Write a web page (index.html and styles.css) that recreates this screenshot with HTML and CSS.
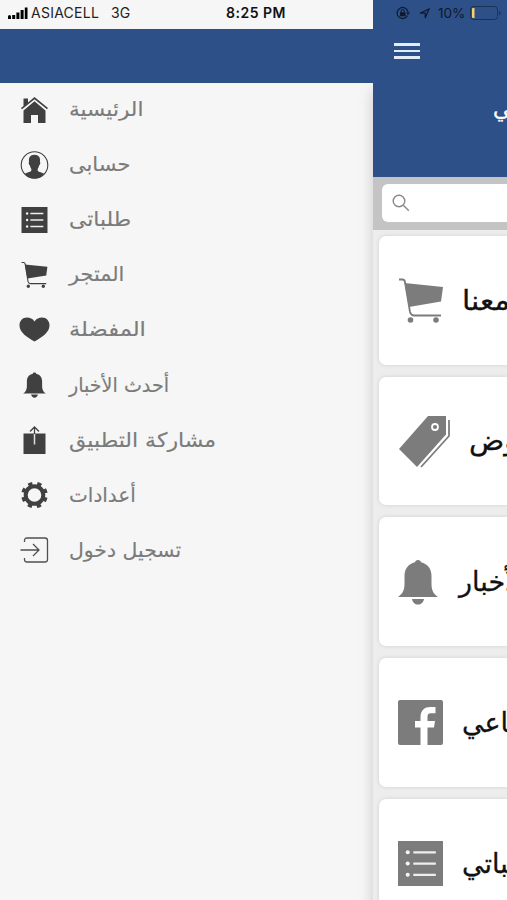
FILE: index.html
```html
<!DOCTYPE html>
<html lang="ar">
<head>
  <meta charset="UTF-8" />
  <meta name="viewport" content="width=device-width, initial-scale=1.0"/>
  <title>القائمة</title>
  <link rel="stylesheet" href="styles.css">
</head>
<body>
  <!-- shared icons -->
  <svg class="defs" width="0" height="0">
    <symbol id="cart" viewBox="0 0 46 46">
      <path d="M1 2.500h3.500q2 0 2.500 2.500l5 30q1 3.500 4 3.500H43" fill="none" stroke="currentColor" stroke-width="1.800"/>
      <path d="M6.500 6L45 10l-2 14.500-32 5.500z" fill="currentColor"/>
      <circle cx="12.500" cy="43" r="2.800" fill="currentColor"/>
      <circle cx="38" cy="43" r="2.800" fill="currentColor"/>
    </symbol>
    <symbol id="bell" viewBox="0 0 40 46">
      <path d="M20 1c2 0 2.500 1 3 2.200C30 5 33.500 10 33.500 17v8c0 6 2 10 6.500 13H0c4.500-3 6.500-7 6.500-13v-8C6.500 10 10 5 17 3.200 17.500 2 18 1 20 1zM14 40h12c-.5 3.500-3 5.500-6 5.500s-5.500-2-6-5.500z" fill="currentColor"/>
    </symbol>
    <symbol id="list" viewBox="0 0 44 44">
      <path d="M0 0h44v44H0z" fill="currentColor"/>
      <g fill="#f5f5f5"><circle cx="9.500" cy="11" r="2"/><circle cx="9.500" cy="22" r="2"/><circle cx="9.500" cy="33" r="2"/></g>
      <path d="M15 11h22M15 22h22M15 33h22" stroke="#eee" stroke-width="2.200"/>
    </symbol>
  </svg>

  <div class="screen">
    <aside class="drawer">
      <div class="status">
        <svg class="signal" width="20" height="12" viewBox="0 0 20 12">
          <path d="M0 9.500a1.300 1.300 0 0 1 3 0V12H0zM4.200 8h3v4h-3zM8.400 5.500h3V12h-3zM12.600 3h3v9h-3zM16.800.5h2.700V12h-2.700z"/>
        </svg>
        <span class="carrier">ASIACELL</span>
        <span class="network">3G</span>
        <span class="time">8:25 PM</span>
      </div>
      <div class="drawer-header"></div>
      <ul class="menu">
        <li>
          <svg width="28" height="28" viewBox="0 0 28 28" fill="#404040">
            <path d="M3 10V2.500h4.500v4L14 1l13.500 11-1 1.300L14 3.300 1.500 13.300.5 12z"/>
            <path d="M14 5.300L25 14.500V27h-7.500v-8h-7v8H3V14.500z"/>
          </svg>
          <span class="home" dir="rtl">الرئيسية</span>
        </li>
        <li>
          <svg width="28" height="28" viewBox="0 0 28 28">
            <circle cx="14" cy="14" r="13.300" fill="none" stroke="#404040" stroke-width="1.100"/>
            <path d="M14 3.800c4.500 0 6 3 5.500 7 .6 1 .2 3-.8 3.500-.5 1.800-1 3-1.500 3.500v2c1 1.500 4.500 1.500 6.800 3.200-2.500 3-6 4.500-10 4.500S6.500 26 4 23c2.300-1.700 5.800-1.700 6.800-3.200v-2c-.6-.5-1-1.700-1.500-3.500-1-.5-1.400-2.500-.8-3.500-.5-4 1-7 5.500-7z" fill="#404040"/>
          </svg>
          <span class="account" dir="rtl">حسابى</span>
        </li>
        <li>
          <svg width="26" height="26"><use href="#list"/></svg>
          <span class="my-orders" dir="rtl">طلباتى</span>
        </li>
        <li>
          <svg width="27" height="27"><use href="#cart"/></svg>
          <span class="store" dir="rtl">المتجر</span>
        </li>
        <li>
          <svg width="30" height="25" viewBox="0 0 30 25">
            <path d="M15 4.500C17 1.500 19.500.5 22.500.5 27 .5 30 4 30 8.500c0 7-8 12-15 16-7-4-15-9-15-16C0 4 3 .5 7.500.5c3 0 5.500 1 7.500 4z" fill="#404040"/>
          </svg>
          <span class="favourites" dir="rtl">المفضلة</span>
        </li>
        <li>
          <svg width="24" height="26"><use href="#bell"/></svg>
          <span class="latest" dir="rtl">أحدث الأخبار</span>
        </li>
        <li>
          <svg width="24" height="28" viewBox="0 0 24 28">
            <path d="M1 7.500h22V28H1z" fill="#404040"/>
            <path d="M12 8v10.500" stroke="#ddd" stroke-width="1.500"/>
            <path d="M12 8V1M7.500 5.500L12 1l4.500 4.500" fill="none" stroke="#404040" stroke-width="1.300"/>
          </svg>
          <span class="share" dir="rtl">مشاركة التطبيق</span>
        </li>
        <li>
          <svg width="28" height="28" viewBox="-14 -14 28 28" fill="none" stroke="#404040">
            <circle r="8.800" stroke-width="4"/>
            <circle r="11.500" stroke-width="3.600" stroke-dasharray="4.200 4.832" transform="rotate(12)"/>
          </svg>
          <span class="settings" dir="rtl">أعدادات</span>
        </li>
        <li>
          <svg width="28" height="26" viewBox="0 0 28 26" fill="none" stroke="#505050" stroke-width="1.300">
            <path d="M4 5V3.500Q4 1 6.500 1h18Q27 1 27 3.500v19q0 2.500-2.500 2.500h-18Q4 25 4 22.500V21M0 13h18M12.500 7l6 6-6 6"/>
          </svg>
          <span class="login" dir="rtl">تسجيل دخول</span>
        </li>
      </ul>
    </aside>

    <main class="page">
      <header class="page-header">
        <div class="status-right">
          <svg width="14" height="14" viewBox="0 0 14 14">
            <path d="M11.500 9.500A5.500 5.500 0 1 1 12 6" fill="none" stroke="#10182b" stroke-width="1.200"/>
            <path d="M10 6.500h4L12 9zM4 6.300h5.500v4H4z" fill="#10182b"/>
            <path d="M5.200 6.500V5a1.500 1.500 0 0 1 3 0v1.500" fill="none" stroke="#10182b"/>
          </svg>
          <svg class="arrow" width="11" height="11" viewBox="0 0 11 11">
            <path d="M10 1L6.200 10V5.200H1z" fill="none" stroke="#10182b" stroke-width="1.200"/>
          </svg>
          <span>10%</span>
          <svg class="battery" width="31" height="14" viewBox="0 0 31 14">
            <rect x=".5" y=".5" width="27" height="13" rx="3" fill="none" stroke="#1d3157"/>
            <path d="M2 3q0-1 1-1h1.500v10H3q-1 0-1-1z" fill="#f3d268"/>
            <path d="M29 4.500q1.500 1 1.500 2.500T29 9.500z" fill="#1d3157"/>
          </svg>
        </div>
        <div class="burger"><i></i><i></i><i></i></div>
        <h1 dir="rtl">عربي</h1>
      </header>

      <div class="search-bar">
        <div class="search">
          <svg width="18" height="18" viewBox="0 0 18 18" fill="none" stroke="#888" stroke-width="1.400">
            <circle cx="7" cy="7" r="5.800"/><path d="M11.300 11.300l5.500 5.500"/>
          </svg>
        </div>
      </div>

      <section class="cards">
        <div class="card">
          <svg width="46" height="46"><use href="#cart"/></svg>
          <span class="shop" dir="rtl">تسوق معنا</span>
        </div>
        <div class="card">
          <svg width="54" height="54" viewBox="0 0 54 54">
            <path d="M30 2h18v18.500L19 53 1 35z" fill="currentColor"/>
            <circle cx="37" cy="13" r="3" fill="none" stroke="#fff" stroke-width="1.800"/>
            <path d="M51 6v16L23 53" fill="none" stroke="currentColor" stroke-width="1.800"/>
          </svg>
          <span class="offers" dir="rtl">العروض</span>
        </div>
        <div class="card">
          <svg width="40" height="46"><use href="#bell"/></svg>
          <span class="news" dir="rtl">أحدث الأخبار</span>
        </div>
        <div class="card">
          <svg width="45" height="45" viewBox="0 0 45 45">
            <rect width="45" height="45" rx="2" fill="currentColor"/>
            <path d="M22.500 45V27.500H17v-6.500h5.500v-4C22.500 10 27 7 32 7h5.500v6.300H33c-2.500 0-3.500 1-3.500 3.500V21h7.500l-1 6.500h-6.500V45z" fill="#fff"/>
          </svg>
          <span class="social" dir="rtl">التواصل الاجتماعي</span>
        </div>
        <div class="card">
          <svg width="45" height="45"><use href="#list"/></svg>
          <span class="orders" dir="rtl">طلباتي</span>
        </div>
      </section>
    </main>
  </div>
</body>
</html>
```
FILE: styles.css
```css
* {
  box-sizing: border-box;
}
body {
  margin: 0;
  font-family: 'DejaVu Sans', sans-serif;
}
.defs {
  position: absolute;
}
.screen {
  display: flex;
  width: 507px;
  height: 900px;
  overflow: hidden;
  background: #f6f6f6;
}
svg {
  flex: none;
}

/* drawer */
.drawer {
  width: 373px;
  flex: none;
  color: #404040;
}
.status {
  height: 29px;
  display: flex;
  align-items: center;
  padding: 0 0 4px 8px;
  font-family: Inter, sans-serif;
  font-size: 14px;
  color: #222;
}
.carrier {
  margin-left: 3px;
  width: 80px;
  letter-spacing: 0.25px;
}
.network {
  width: 20px;
}
.time {
  margin-left: 95px;
  font-weight: 600;
  letter-spacing: 0.5px;
  color: #111;
}
.drawer-header {
  height: 54px;
  background: #2d5088;
}
.menu {
  list-style: none;
  margin: -1px 0 0;
  padding: 0;
}
.menu li {
  height: 55.1px;
  display: flex;
  align-items: center;
  padding-left: 14px;
}
.menu li svg {
  width: 41px;
}
.menu span {
  margin: -1px 0 0 14px;
  font-size: 20px;
  line-height: 30px;
  white-space: nowrap;
  color: #7b7b7b;
  -webkit-text-stroke: 0.15px #7b7b7b;
  transform-origin: left center;
}
.menu .home {
  transform: scaleX(1.08);
}
.menu .account {
  transform: scaleX(1.05);
}
.menu .my-orders {
  transform: scaleX(1.09);
}
.menu .store {
  transform: scaleX(1.04);
}
.menu .favourites {
  transform: scaleX(1.13);
}
.menu .latest {
  transform: scaleX(0.955);
}
.menu .share {
  transform: scaleX(1.1);
}
.menu .login {
  transform: scaleX(1.02);
}

/* page pushed to the right */
.page {
  width: 134px;
  flex: none;
  height: 900px;
  background: #ededed;
  box-shadow: 0 90px 14px rgba(0, 0, 0, 0.18);
}
.page-header {
  height: 177px;
  background: #2d5088;
  overflow: hidden;
}
.status-right {
  display: flex;
  align-items: center;
  height: 26px;
  padding-left: 23px;
  font-family: Inter, sans-serif;
  font-size: 13.5px;
  color: #10182b;
}
.arrow {
  margin: 0 8px 0 9px;
}
.battery {
  margin-left: 5px;
}
.burger {
  display: flex;
  flex-direction: column;
  gap: 4px;
  width: 26px;
  margin: 17px 0 0 21px;
}
.burger i {
  height: 2.5px;
  background: #e4ecfa;
}
h1 {
  width: max-content;
  margin: 35px 0 0 120px;
  font-size: 22px;
  line-height: 30px;
  font-weight: normal;
  color: #fff;
  -webkit-text-stroke: 0.3px #fff;
}
.search-bar {
  height: 53px;
  padding: 7px 0 8px 9px;
  background: #c4c4c4;
  overflow: hidden;
}
.search {
  height: 38px;
  display: flex;
  align-items: center;
  padding-left: 10px;
  background: #fff;
  border-radius: 6px 0 0 6px;
}
.cards {
  height: 670px;
  padding: 6px 0 0 6px;
  display: flex;
  flex-direction: column;
  gap: 12.2px;
  overflow: hidden;
}
.card {
  flex: none;
  height: 128.5px;
  display: flex;
  align-items: center;
  padding-left: 19px;
  background: #fff;
  border-radius: 7px 0 0 7px;
  box-shadow: 0 0 4px rgba(0, 0, 0, 0.12);
  color: #7c7c7c;
  overflow: hidden;
}
.card span {
  flex: none;
  font-size: 27px;
  white-space: nowrap;
  color: #111;
  -webkit-text-stroke: 0.3px #111;
  transform-origin: left center;
}
.card .shop {
  margin-left: 18px;
  transform: scaleX(1.1);
}
.card .offers {
  margin-left: 17px;
  transform: scaleX(1.08);
}
.card .news {
  margin-left: 21px;
}
.card .social,
.card .orders {
  margin-left: 19px;
}
```
